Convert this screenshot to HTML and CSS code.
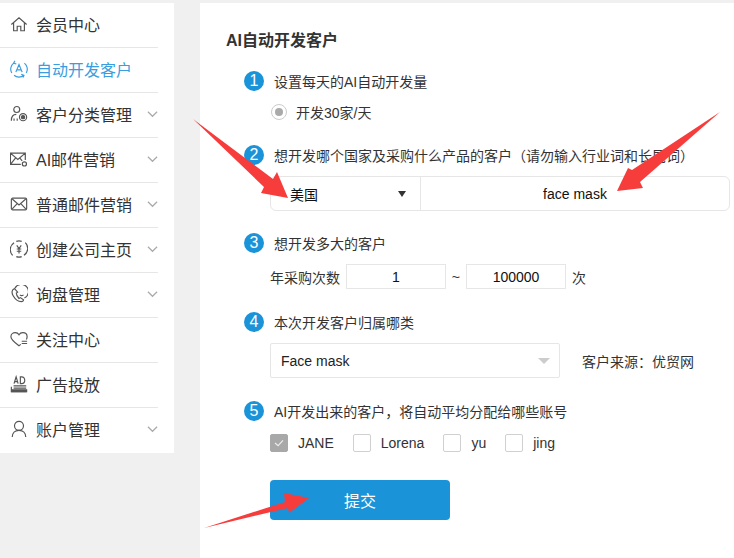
FILE: index.html
```html
<!DOCTYPE html>
<html lang="zh-CN">
<head>
    <meta charset="UTF-8">
    <title>AI自动开发客户</title>
    <link rel="stylesheet" href="styles.css">
</head>
<body>
    <div class="page">
        <!-- 左侧菜单 -->
        <ul class="menu">
            <li class="menu-item">
                <svg class="menu-icon" viewBox="0 0 20 20"><path d="M1.500 10.500 10 3l8.500 7.500M4 9v8.500h4v-5h4v5h4V9"/></svg>
                <span>会员中心</span>
            </li>
            <li class="menu-item active">
                <svg class="menu-icon" viewBox="0 0 20 20"><path d="M4 3.500a8.500 8.500 0 0 0-2 11M16 3.500a8.500 8.500 0 0 1 2 11M4.500 17a8.500 8.500 0 0 0 11 0M6.500 13.500 10 5l3.500 8.500M7.800 11h4.400M5.500 1l-1.500 2.500 3 1M14.500 19.500l1-2.500-3-1"/></svg>
                <span>自动开发客户</span>
            </li>
            <li class="menu-item">
                <svg class="menu-icon" viewBox="0 0 20 20"><circle cx="7.500" cy="5" r="3.300"/><path d="M1.500 17.500c0-4.500 2-7 5.500-7M4.500 15v2.500M8 15v2.500"/><circle cx="14.500" cy="13.500" r="4"/><circle cx="14.500" cy="13.500" r="1.800" class="fill"/></svg>
                <span>客户分类管理</span>
                <svg class="arrow" viewBox="0 0 12 8"><path d="M1 1.500 6 6.500l5-5"/></svg>
            </li>
            <li class="menu-item">
                <svg class="menu-icon" viewBox="0 0 20 20"><path d="M17 11V3.500H.5v12.500h11.500M.5 3.500l8.200 7 8.300-7M.5 16l6-7.500M11 9l2.500 3"/><circle cx="16" cy="15.500" r="2.300"/></svg>
                <span>AI邮件营销</span>
                <svg class="arrow" viewBox="0 0 12 8"><path d="M1 1.500 6 6.500l5-5"/></svg>
            </li>
            <li class="menu-item">
                <svg class="menu-icon" viewBox="0 0 20 20"><rect x="1.500" y="3.500" width="17" height="13" rx="1.500"/><path d="M2.500 4.500 10 11l7.500-6.500M2.500 15.500 8 9.500M17.500 15.500 12 9.500"/></svg>
                <span>普通邮件营销</span>
                <svg class="arrow" viewBox="0 0 12 8"><path d="M1 1.500 6 6.500l5-5"/></svg>
            </li>
            <li class="menu-item">
                <svg class="menu-icon" viewBox="0 0 20 20"><path d="M4.500 3a9 9 0 0 0-1.500 14M15.500 17a9 9 0 0 0 1.500-14M7 1.500a9 9 0 0 1 6 0M7 18.500a9 9 0 0 0 6 0M7.500 6 10 9.500 12.500 6M7.500 10h5M7.500 12.500h5M10 9.500V15"/></svg>
                <span>创建公司主页</span>
                <svg class="arrow" viewBox="0 0 12 8"><path d="M1 1.500 6 6.500l5-5"/></svg>
            </li>
            <li class="menu-item">
                <svg class="menu-icon" viewBox="0 0 20 20"><path d="M5 4C2 5 1.500 8.500 3.500 12S9 18.500 12.500 18.500c1.500 0 2.500-1 2.500-2l-3.500-2.500-1.500 1C8.500 13.500 7 11 7 9l1.500-1L5 4ZM5.500 3.500A8 8 0 1 1 16 14.500M11 7.500h.1M15 7.500h.1M11 11c1.200 1 2.800 1 4 0"/></svg>
                <span>询盘管理</span>
                <svg class="arrow" viewBox="0 0 12 8"><path d="M1 1.500 6 6.500l5-5"/></svg>
            </li>
            <li class="menu-item">
                <svg class="menu-icon" viewBox="0 0 20 20"><path d="M12 16 10 17.500C6 14.500 1 11 1 7.500 1 4.500 3.500 3 5.800 3c1.900 0 3.400 1 4.200 2.300C10.800 4 12.300 3 14.200 3c2.600 0 4.800 1.600 4.800 4.500 0 1-.3 2-.8 3M13 12.500h6M13 15h6"/></svg>
                <span>关注中心</span>
            </li>
            <li class="menu-item">
                <svg class="menu-icon" viewBox="0 0 20 20"><path d="M4.500 9.500 6.800 2 9 9.500M5.300 7.300h3M11.500 2v7.500H13c4.500 0 4.500-7.500 0-7.500h-1.500ZM4 12h14M4 14.500h14M1.500 13v5.500h17"/><path d="M2 16.500h16.500v2H2z" class="fill"/></svg>
                <span>广告投放</span>
            </li>
            <li class="menu-item last">
                <svg class="menu-icon" viewBox="0 0 20 20"><circle cx="10" cy="6.500" r="5"/><path d="M2.500 19c0-4.500 3-7.500 7.500-7.500s7.500 3 7.500 7.500"/></svg>
                <span>账户管理</span>
                <svg class="arrow" viewBox="0 0 12 8"><path d="M1 1.500 6 6.500l5-5"/></svg>
            </li>
        </ul>

        <!-- 表单 -->
        <div class="main">
            <h1 class="title">AI自动开发客户</h1>

            <div class="step step-1">
                <div class="step-label"><i class="step-num">1</i>设置每天的AI自动开发量</div>
                <label class="radio-row"><i class="radio"></i>开发30家/天</label>
            </div>

            <div class="step step-2">
                <div class="step-label"><i class="step-num">2</i>想开发哪个国家及采购什么产品的客户（请勿输入行业词和长尾词）</div>
                <div class="search-box">
                    <div class="country">美国<i class="caret"></i></div>
                    <div class="keyword">face mask</div>
                </div>
            </div>

            <div class="step step-3">
                <div class="step-label"><i class="step-num">3</i>想开发多大的客户</div>
                <div class="range-row">
                    <span>年采购次数</span>
                    <div class="num-input">1</div>
                    <span class="tilde">~</span>
                    <div class="num-input">100000</div>
                    <span>次</span>
                </div>
            </div>

            <div class="step step-4">
                <div class="step-label"><i class="step-num">4</i>本次开发客户归属哪类</div>
                <div class="group-row">
                    <div class="group-select">Face mask<i class="caret-gray"></i></div>
                    <span>客户来源：优贸网</span>
                </div>
            </div>

            <div class="step step-5">
                <div class="step-label"><i class="step-num">5</i>AI开发出来的客户，将自动平均分配给哪些账号</div>
                <div class="check-row">
                    <label class="check-item"><i class="check on"><svg viewBox="0 0 18 18"><path d="M4.500 9 8 12l5.500-6"/></svg></i>JANE</label>
                    <label class="check-item"><i class="check"></i>Lorena</label>
                    <label class="check-item"><i class="check"></i>yu</label>
                    <label class="check-item"><i class="check"></i>jing</label>
                </div>
            </div>

            <button class="submit">提交</button>
        </div>

        <!-- 截图上的红色箭头 -->
        <svg class="marks" viewBox="0 0 734 558">
            <path d="M193 119 273 179 277 172 288 198 261 193 264 187Z"/>
            <path d="M720 112 640 182 643 188 617 191 628 168 632 170Z"/>
            <path d="M204 528 285 502 284 493 309 498 289 513 288 508Z"/>
        </svg>
    </div>
</body>
</html>
```

FILE: styles.css
```css
* {
    box-sizing: border-box;
}

body {
    margin: 0;
    background-color: #f0f0f0;
    font-family: "Liberation Sans", "Noto Sans CJK SC", sans-serif;
    font-size: 14px;
    color: #333;
}

.page {
    position: relative;
    display: flex;
    align-items: flex-start;
    gap: 26px;
    width: 734px;
    height: 558px;
    padding-top: 3px;
    overflow: hidden;
}

/* 左侧菜单 */
.menu {
    flex: none;
    width: 174px;
    margin: 0;
    padding: 0 16px 0 0;
    list-style: none;
    background-color: #fff;
}

.menu-item {
    display: flex;
    align-items: center;
    height: 45px;
    padding-left: 10px;
    padding-bottom: 2px;
    border-bottom: 1px solid #e6e6e6;
    font-size: 16px;
    color: #333;
}

.menu-item.last {
    border-bottom-color: transparent;
}

.menu-item.active {
    color: #3a9de0;
}

.menu-icon {
    flex: none;
    width: 18px;
    height: 18px;
    margin-right: 8px;
    fill: none;
    stroke: #555;
    stroke-width: 1.300;
}

.menu-icon .fill {
    fill: #555;
}

.active .menu-icon {
    stroke: #3a9de0;
}

.arrow {
    width: 11px;
    height: 8px;
    margin-left: auto;
    fill: none;
    stroke: #aaa;
    stroke-width: 1.300;
}

/* 表单 */
.main {
    flex: none;
    width: 534px;
    height: 555px;
    padding: 28px 0 0 26px;
    background-color: #fff;
}

.title {
    margin: 0;
    font-size: 16px;
    line-height: 20px;
    font-weight: bold;
    color: #333;
}

.step {
    padding-left: 18px;
}

.step-1 {
    margin-top: 20px;
}

.step-2 {
    margin-top: 23px;
}

.step-3 {
    margin-top: 22px;
}

.step-4 {
    margin-top: 23px;
}

.step-5 {
    margin-top: 23px;
}

.step-label {
    display: flex;
    align-items: center;
    height: 20px;
    white-space: nowrap;
}

.step-num {
    flex: none;
    display: flex;
    align-items: center;
    justify-content: center;
    width: 20px;
    height: 20px;
    margin-right: 10px;
    border-radius: 50%;
    background-color: #1b93d8;
    color: #fff;
    font-size: 16px;
    font-style: normal;
}

.radio-row {
    display: flex;
    align-items: center;
    height: 20px;
    margin: 11px 0 0 27px;
}

.radio {
    position: relative;
    width: 16px;
    height: 16px;
    margin-right: 9px;
    border: 1px solid #ccc;
    border-radius: 50%;
}

.radio::after {
    content: "";
    position: absolute;
    top: 3px;
    left: 3px;
    width: 8px;
    height: 8px;
    border-radius: 50%;
    background-color: #aaa;
}

.search-box {
    display: flex;
    width: 460px;
    height: 35px;
    margin: 11px 0 0 26px;
    border: 1px solid #e6e6e6;
    border-radius: 6px;
    color: #111;
}

.country {
    position: relative;
    display: flex;
    align-items: center;
    width: 150px;
    padding-left: 19px;
    border-right: 1px solid #e6e6e6;
}

.caret {
    position: absolute;
    top: 14px;
    right: 14px;
    border-left: 4px solid transparent;
    border-right: 4px solid transparent;
    border-top: 6px solid #333;
}

.keyword {
    flex: 1;
    display: flex;
    align-items: center;
    justify-content: center;
}

.range-row {
    display: flex;
    align-items: center;
    height: 25px;
    margin: 11px 0 0 26px;
}

.num-input {
    display: flex;
    align-items: center;
    justify-content: center;
    width: 100px;
    height: 25px;
    margin-left: 6px;
    border: 1px solid #e6e6e6;
    color: #111;
}

.tilde {
    width: 14px;
    text-align: right;
}

.range-row > span:last-child {
    margin-left: 6px;
}

.group-row {
    display: flex;
    align-items: center;
    margin: 11px 0 0 26px;
}

.group-select {
    position: relative;
    display: flex;
    align-items: center;
    width: 290px;
    height: 35px;
    margin-right: 22px;
    padding-left: 10px;
    border: 1px solid #e6e6e6;
    border-radius: 2px;
    color: #222;
}

.caret-gray {
    position: absolute;
    top: 14px;
    right: 9px;
    border-left: 6px solid transparent;
    border-right: 6px solid transparent;
    border-top: 6px solid #ccc;
}

.check-row {
    display: flex;
    align-items: center;
    gap: 19px;
    margin: 13px 0 0 26px;
}

.check-item {
    display: flex;
    align-items: center;
    height: 18px;
}

.check {
    width: 18px;
    height: 18px;
    margin-right: 10px;
    border: 1px solid #d0d0d0;
    border-radius: 2px;
}

.check.on {
    border-color: #a8a8a8;
    background-color: #a8a8a8;
}

.check svg {
    display: block;
    width: 16px;
    height: 16px;
    fill: none;
    stroke: #eee;
    stroke-width: 1.200;
}

.submit {
    display: block;
    width: 180px;
    height: 40px;
    margin: 28px 0 0 44px;
    border: none;
    border-radius: 4px;
    background-color: #1b93d8;
    color: #fff;
    font-family: inherit;
    font-size: 16px;
}

/* 红色箭头，盖在内容上 */
.marks {
    position: absolute;
    top: 0;
    left: 0;
    width: 734px;
    height: 558px;
    fill: #f73c3c;
}
```
